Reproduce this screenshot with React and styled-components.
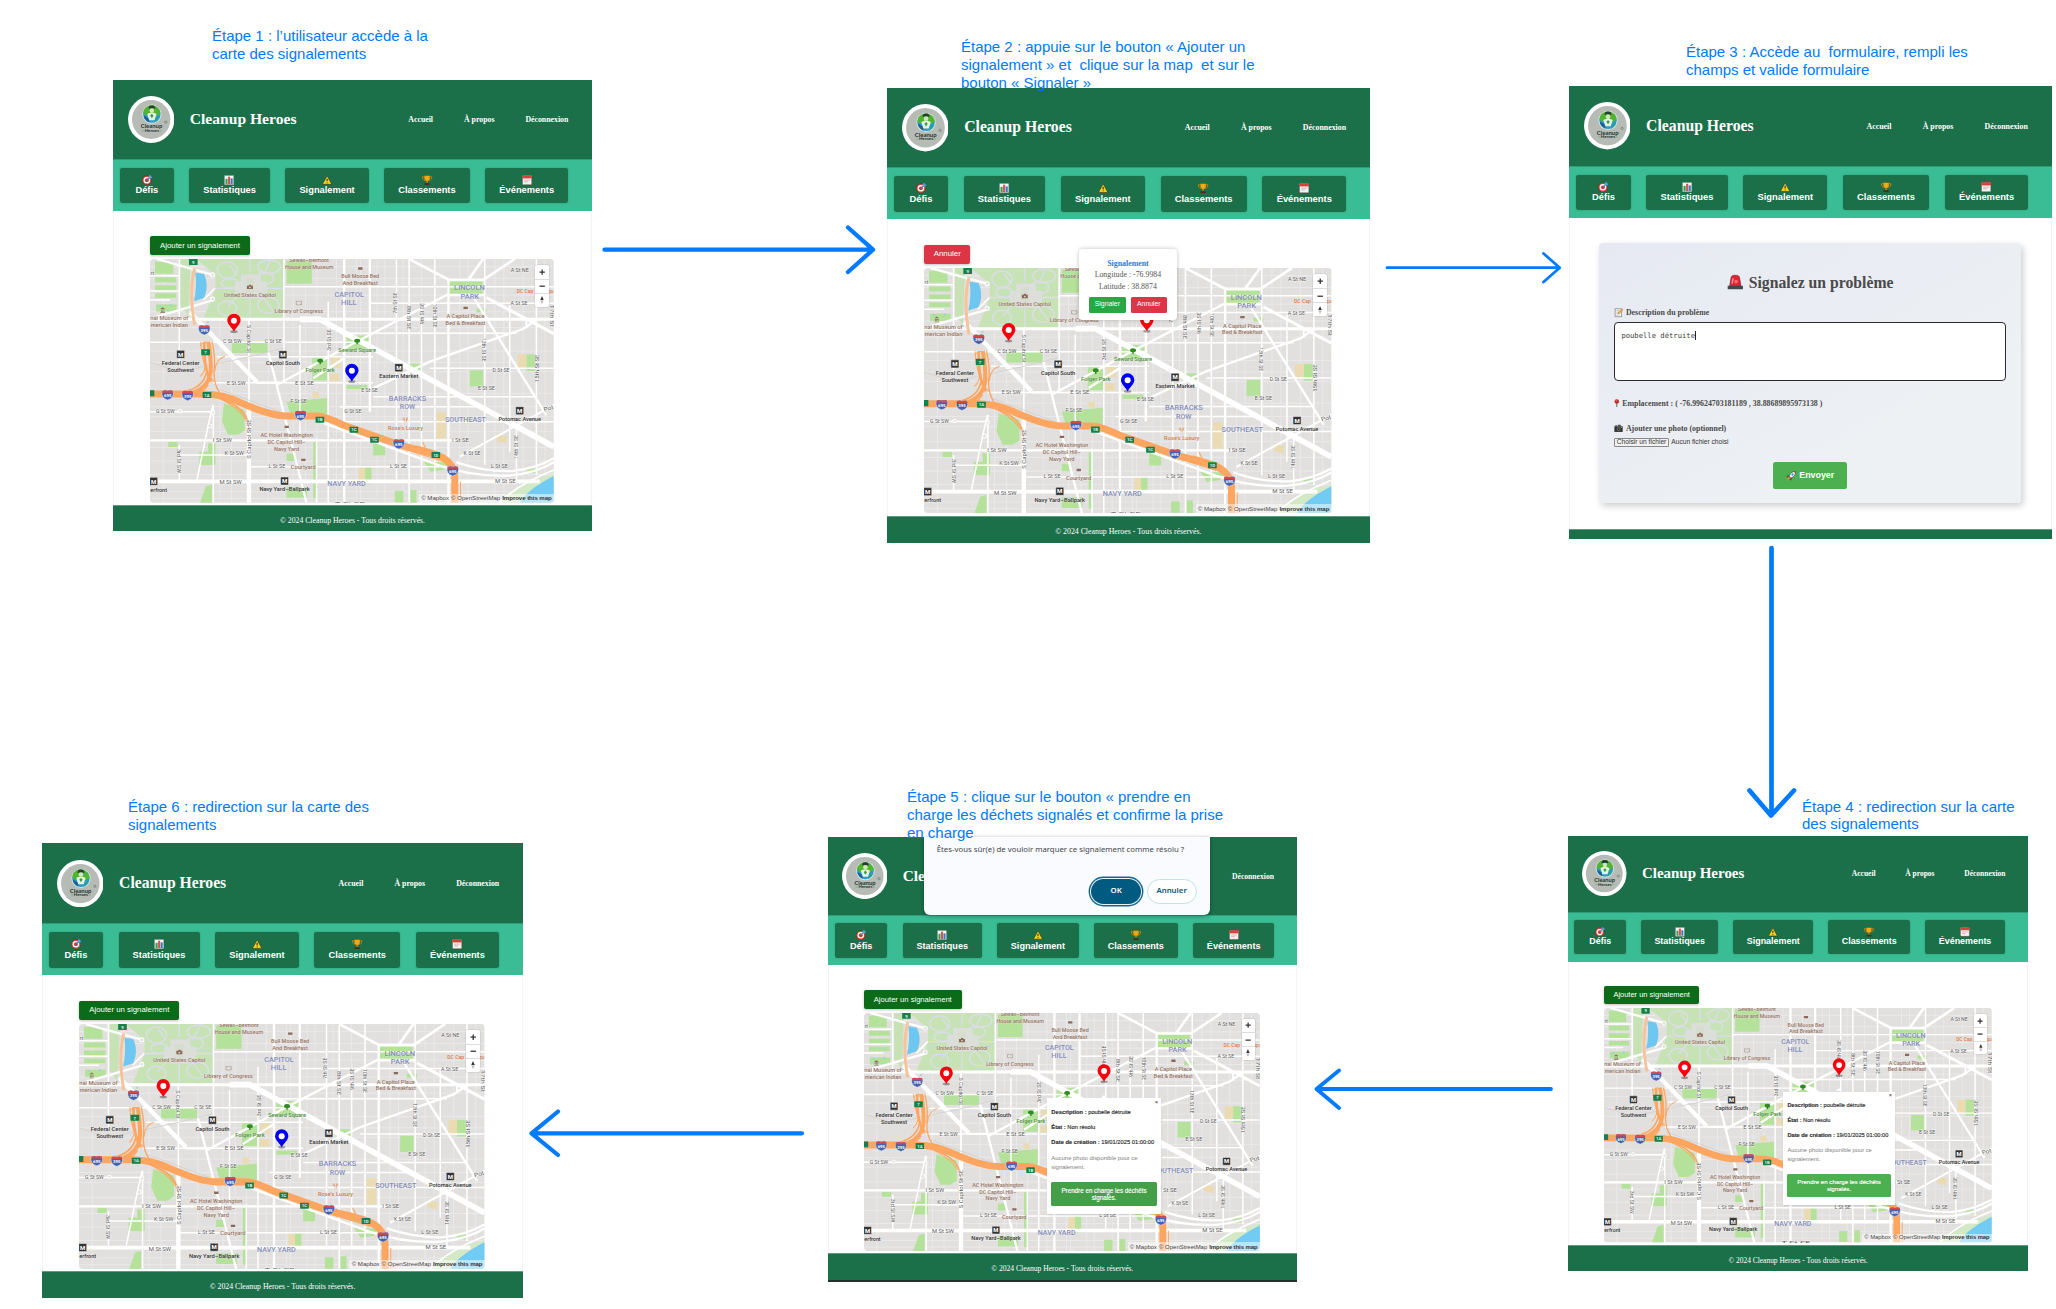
import React from "react";
import styled, { createGlobalStyle } from "styled-components";

const u = (n) => `calc(var(--u) * ${n})`;

const Global = createGlobalStyle`
  html, body { margin: 0; background: #fff; }
  * { box-sizing: border-box; }
`;

const serif = `"Liberation Serif", "Times New Roman", serif`;
const sans = `"Liberation Sans", Arial, sans-serif`;

/* ---------- canvas ---------- */
const Canvas = styled.div`
  position: relative;
  width: 2056px;
  height: 1309px;
  overflow: hidden;
  background: #fff;
`;
const Note = styled.p`
  position: absolute;
  left: ${(p) => p.$x}px;
  top: ${(p) => p.$y}px;
  margin: 0;
  white-space: pre;
  font: 15px/17.9px ${sans};
  color: #007aff;
`;
const Arrows = styled.svg`
  position: absolute;
  inset: 0;
  fill: none;
  stroke: #007aff;
  stroke-linecap: round;
  stroke-linejoin: round;
`;
const Board = styled.section`
  --u: ${(p) => p.$w / 479}px;
  position: absolute;
  left: ${(p) => p.$x}px;
  top: ${(p) => p.$y}px;
  width: ${(p) => p.$w}px;
  height: ${(p) => p.$h}px;
  display: flex;
  flex-direction: column;
  background: #fff;
  box-shadow: inset 2px 0 1px -1px #f3f3f3, inset -2px 0 1px -1px #f3f3f3;
  ${(p) => p.$edge && "border-bottom: 2px solid #26302c;"}
`;

/* ---------- site chrome ---------- */
const Header = styled.header`
  flex: none;
  height: ${(p) => p.$h}px;
  display: flex;
  align-items: center;
  padding: 0 ${u(23.7)} 0 ${u(14.7)};
  background: #1b7049;
  color: #fff;
  font-family: ${serif};
`;
const Logo = styled.svg`
  width: ${u(46.4)};
  height: ${u(47)};
  flex: none;
`;
const Title = styled.h1`
  margin: 0 auto 0 ${u(15.7)};
  font-size: ${u(15.6)};
  line-height: 1.2;
  white-space: nowrap;
`;
const Links = styled.nav`
  display: flex;
  gap: ${u(31)};
  font-size: ${u(7.8)};
  font-weight: bold;
  white-space: nowrap;
`;
const Tabs = styled.nav`
  flex: none;
  height: ${(p) => p.$h}px;
  display: flex;
  align-items: center;
  gap: ${u(15.6)};
  padding-left: ${(p) => p.$pad}px;
  background: #3abd94;
  border-top: 1px solid #2f9b78;
`;
const Tab = styled.button`
  width: ${(p) => u(p.$w)};
  height: ${u(35.4)};
  display: flex;
  flex-direction: column;
  align-items: center;
  justify-content: center;
  gap: ${u(0.5)};
  border: 0;
  padding: 0 0 ${u(0.5)};
  border-radius: ${u(2.4)};
  background: #1b7049;
  box-shadow: 0 0 2px rgba(0, 70, 40, 0.35);
  color: #fff;
  font: bold ${u(9.3)} / 1.1 ${sans};
`;
const Icon = styled.svg`
  width: ${(p) => u(p.$s || 10.2)};
  height: ${(p) => u(p.$s || 10.2)};
  flex: none;
  overflow: visible;
`;
const Main = styled.main`
  flex: 1;
  min-height: 0;
  padding: ${u(25.5)} ${u(38.1)} 0 ${u(37.2)};
  display: flex;
  flex-direction: column;
  align-items: flex-start;
`;
const Footer = styled.footer`
  flex: none;
  height: ${(p) => p.$h}px;
  display: flex;
  align-items: center;
  justify-content: center;
  padding-top: ${u(5)};
  padding-bottom: ${u(1)};
  background: #1b7049;
  border-top: 1px solid #5c9c80;
  color: #fff;
  font: ${u(7.76)} / 1 ${serif};
  white-space: nowrap;
`;
const Action = styled.button`
  flex: none;
  width: ${(p) => u(p.$w)};
  height: ${u(18.8)};
  margin-bottom: ${u(4.4)};
  padding: 0;
  border: 0;
  border-radius: ${u(2)};
  background: ${(p) => p.$bg};
  box-shadow: 0 1px 3px rgba(0, 0, 0, 0.25);
  color: #fff;
  font: ${u(7.8)} / 1 ${sans};
`;

/* ---------- map ---------- */
const MapBox = styled.div`
  position: relative;
  flex: none;
  width: 100%;
  height: ${(p) => p.$h}px;
`;
const MapArt = styled.svg`
  display: block;
  width: 100%;
  height: 100%;
  border-radius: ${u(4)};
  font-family: Roboto, "Open Sans", sans-serif;
`;
const Controls = styled.div`
  position: absolute;
  top: ${u(6)};
  right: ${u(4.7)};
  width: ${u(14)};
  height: ${u(41.6)};
  display: grid;
  grid-template-rows: repeat(3, 1fr);
  background: #fff;
  border-radius: ${u(2)};
  box-shadow: 0 0 0 1px rgba(0, 0, 0, 0.06);
`;
const Control = styled.button`
  border: 0;
  padding: 0;
  background: none;
  display: grid;
  place-items: center;
  & + & { border-top: 1px solid #ddd; }
`;
const Credit = styled.div`
  position: absolute;
  right: 0;
  bottom: 0;
  display: flex;
  gap: ${u(2)};
  align-items: center;
  height: ${u(9)};
  padding: 0 ${u(2.2)};
  background: rgba(255, 255, 255, 0.5);
  color: #444;
  white-space: nowrap;
  font: ${u(6.1)} / 1 ${sans};
  b { color: #333; letter-spacing: -0.01em; }
`;

/* ---------- popups ---------- */
const PickPopup = styled.div`
  position: absolute;
  left: ${u(153.3)};
  top: ${u(-18.8)};
  width: ${u(97.2)};
  height: ${u(70.3)};
  display: flex;
  flex-direction: column;
  align-items: center;
  padding-top: ${u(8.8)};
  background: #fff;
  border-radius: ${u(3.5)};
  box-shadow: 0 0 4px rgba(0, 0, 0, 0.25);
  font: ${u(7.8)} / ${u(11.2)} ${serif};
  color: #555;
  white-space: nowrap;
  strong { color: #1a7fd0; }
`;
const PickButtons = styled.div`
  display: flex;
  gap: ${u(5.2)};
  margin-top: ${u(5.2)};
`;
const SmallButton = styled.button`
  width: ${(p) => u(p.$w)};
  height: ${u(15.2)};
  padding: 0;
  border: 0;
  border-radius: ${u(1.6)};
  background: ${(p) => p.$bg};
  color: #fff;
  font: ${u(6.8)} / 1 ${sans};
`;
const InfoPopup = styled.div`
  position: absolute;
  left: ${u(186.7)};
  top: ${u(86.8)};
  width: ${u(116.3)};
  height: ${u(118.2)};
  padding: ${u(10)} ${u(4.4)} 0;
  background: #fff;
  box-shadow: 0 1px 2px rgba(0, 0, 0, 0.1);
  color: #2c2c2c;
  font: ${u(5.9)} / ${u(9.2)} ${sans};
  &::before {
    content: "";
    position: absolute;
    left: 50%;
    top: ${u(-3.6)};
    transform: translateX(-50%);
    border: ${u(3.8)} solid transparent;
    border-top: 0;
    border-bottom-color: #fff;
  }
`;
const InfoRow = styled.p`
  margin: 0 0 ${u(6.4)};
  white-space: nowrap;
  -webkit-text-stroke: 0.15px #2c2c2c;
`;
const InfoMuted = styled.p`
  margin: 0 0 ${u(11)};
  color: #808080;
  font-size: ${u(6.05)};
`;
const Close = styled.span`
  position: absolute;
  right: ${u(3)};
  top: ${u(-0.3)};
  font-size: ${u(6)};
`;
const TakeButton = styled.button`
  width: 100%;
  height: ${u(24)};
  border: 0;
  padding: 0;
  border-radius: ${u(1.6)};
  background: ${(p) => p.$bg};
  color: #fff;
  font: ${u(6.4)} / ${u(7.2)} ${sans};
  -webkit-text-stroke: 0.15px #fff;
`;
const Dialog = styled.div`
  position: absolute;
  left: ${u(98.4)};
  top: 0;
  width: ${u(291.6)};
  height: ${u(80)};
  display: flex;
  flex-direction: column;
  justify-content: space-between;
  padding: ${u(6.8)} ${u(13.6)} ${u(11.6)} ${u(13)};
  border-radius: 0 0 ${u(6)} ${u(6)};
  background: #f9fbfe;
  box-shadow: 0 1px 4px rgba(0, 0, 0, 0.35);
  color: #45484c;
  font: ${u(7.95)} / ${u(12)} "Noto Sans", "Open Sans", sans-serif;
  white-space: nowrap;
`;
const DialogButtons = styled.div`
  display: flex;
  justify-content: flex-end;
  align-items: center;
  gap: ${u(5.6)};
`;
const Pill = styled.button`
  width: ${u(51)};
  height: ${u(26)};
  padding: 0;
  border-radius: ${u(13)};
  font: 600 ${u(8)} / 1 "Noto Sans", "Open Sans", sans-serif;
  ${(p) =>
    p.$primary
      ? "border:0;background:#015b80;color:#fff;box-shadow:0 0 0 1px #e6f4fa,0 0 0 2.4px #1a6688;"
      : "border:1.3px solid #c0e4ef;background:#fff;color:#08577a;"}
`;

/* ---------- form ---------- */
const FormMain = styled.main`
  flex: 1;
  min-height: 0;
  padding: ${u(25.3)} ${u(30.4)} 0;
`;
const Card = styled.div`
  height: ${u(258)};
  display: flex;
  flex-direction: column;
  padding: ${u(29)} ${u(14.6)} 0 ${u(14.4)};
  border-radius: ${u(4)};
  background: linear-gradient(150deg, #e6e9f2, #edf1f4 70%);
  box-shadow: 2px 3px 7px rgba(0, 0, 0, 0.2);
  font-family: ${serif};
  color: #4a4a4a;
`;
const CardTitle = styled.h2`
  display: flex;
  justify-content: center;
  align-items: center;
  gap: ${u(5.4)};
  margin: 0 0 ${u(13.5)};
  font-size: ${u(15.6)};
  line-height: ${u(20)};
`;
const Label = styled.label`
  display: flex;
  align-items: center;
  gap: ${(p) => u(p.$gap)};
  height: ${u(12)};
  margin-bottom: ${(p) => u(p.$mb)};
  font-weight: bold;
  font-size: ${u(7.82)};
  white-space: nowrap;
`;
const Area = styled.div`
  height: ${u(58)};
  margin-bottom: ${u(16.3)};
  padding: ${u(7.6)} ${u(6.5)};
  border: 1.4px solid #2b2b2e;
  border-radius: ${u(4)};
  background: #fff;
  font: ${u(7.15)} / ${u(9)} "DejaVu Sans Mono", monospace;
  color: #3c3c3c;
`;
const Caret = styled.span`
  display: inline-block;
  width: 1px;
  height: ${u(9)};
  background: #222;
  vertical-align: top;
`;
const FileRow = styled.div`
  display: flex;
  align-items: center;
  gap: ${u(2)};
  margin-bottom: ${u(14.8)};
  font: ${u(6.6)} / 1 ${sans};
  color: #333;
`;
const FileButton = styled.span`
  width: ${u(55)};
  height: ${u(9.2)};
  display: grid;
  place-items: center;
  border: 1px solid #888;
  border-radius: 1px;
  background: #f2f2f2;
`;
const Send = styled.button`
  align-self: center;
  width: ${u(73.4)};
  height: ${u(26.5)};
  display: flex;
  align-items: center;
  justify-content: center;
  gap: ${u(3.2)};
  padding: 0;
  border: 0;
  border-radius: ${u(2.6)};
  background: #4caf50;
  color: #fff;
  font: bold ${u(8.8)} / 1 ${sans};
`;

/* ---------- icons ---------- */
const art = {
  target: (
    <>
      <circle cx="11.5" cy="12.5" r="11" fill="#e0483f" stroke="#1d3a2c" strokeWidth="1" />
      <circle cx="11.5" cy="12.5" r="7.6" fill="#fff" />
      <circle cx="11.5" cy="12.5" r="4.6" fill="#d9382f" />
      <path d="M11 13L20 4" stroke="#1f7fc4" strokeWidth="2.4" />
      <path d="M16 7V2l4-2 1 3 3 1-2 4h-5z" fill="#4aa8e0" />
    </>
  ),
  chart: (
    <>
      <rect x="1" y="1" width="22" height="22" fill="#f6f6f6" stroke="#63806f" />
      <rect x="3.500" y="9" width="5" height="12.500" fill="#3c9b51" />
      <rect x="9.500" y="4" width="5" height="17.500" fill="#d35555" />
      <rect x="15.500" y="8" width="5" height="13.500" fill="#3a7cc2" />
    </>
  ),
  warn: (
    <>
      <path d="M12 2L23 22H1z" fill="#fbd01f" stroke="#2a3a18" strokeWidth="1.4" strokeLinejoin="round" />
      <path d="M12 9v6M12 17.5v2" stroke="#222" strokeWidth="2.4" />
    </>
  ),
  trophy: (
    <>
      <path d="M5 4H1c0 5 2 8 6 8M19 4h4c0 5-2 8-6 8" fill="none" stroke="#c98709" strokeWidth="2.2" />
      <path d="M5 1h14v6c0 5-3 8-7 8s-7-3-7-8z" fill="#f0a815" stroke="#4a3b10" strokeWidth=".8" />
      <path d="M10.500 14h3v5h-3z" fill="#c98709" />
      <path d="M6 19h12v4.500H6z" fill="#4b2f1c" />
    </>
  ),
  calendar: (
    <>
      <rect x="1" y="1" width="22" height="22" rx="2" fill="#f4f0f0" stroke="#62312f" strokeWidth="1" />
      <path d="M1 1h22v7H1z" fill="#d8403c" />
      <path d="M5 12h14M5 16h9" stroke="#c9a9a9" strokeWidth="1.8" />
    </>
  ),
  siren: (
    <>
      <path d="M4 17L6 5c.5-2 2-3 4-3h4c2 0 3.500 1 4 3l2 12z" fill="#e22434" stroke="#7c1520" />
      <path d="M9 6c-1 3-1.500 6-1.500 8" stroke="#ff8c93" strokeWidth="2" fill="none" />
      <circle cx="13" cy="11" r="2.600" fill="#ff6a6a" />
      <path d="M1 17h22v5H1z" fill="#43484d" />
    </>
  ),
  memo: (
    <>
      <path d="M3 2h17v21H3z" fill="#fbf8ee" stroke="#4f4f4f" strokeWidth="1.400" />
      <path d="M6 7h9M6 11h7M6 15h9M6 19h9" stroke="#999" strokeWidth="1.300" />
      <path d="M11 15l1-4 9-9 3 3-9 9z" fill="#f0b53a" stroke="#7b4c1a" strokeWidth=".8" />
    </>
  ),
  pin: (
    <>
      <path d="M6.500 11h3v12h-3z" fill="#6b6b6b" />
      <circle cx="8" cy="7" r="6.500" fill="#c22a26" />
      <circle cx="6.500" cy="5" r="1.800" fill="#ef7a70" />
    </>
  ),
  camera: (
    <>
      <path d="M1 6h22v15H1z" fill="#2e3230" />
      <path d="M3 3h5v3H3zM10 2h8v4h-8z" fill="#4a4e4c" />
      <circle cx="12" cy="13.500" r="5" fill="#737a78" />
      <circle cx="12" cy="13.500" r="2.500" fill="#1a1d1c" />
      <path d="M18 8h3v2h-3z" fill="#e0c24a" />
    </>
  ),
  rocket: (
    <>
      <path d="M7 12c3-7 8-11 16-11 0 8-4 13-11 16z" fill="#e9eef3" stroke="#23384c" strokeWidth="1.200" />
      <path d="M8 10L2 12l2 4zM14 16l-2 6-4-2z" fill="#c6312f" stroke="#532" strokeWidth=".8" />
      <path d="M18 1l5 0 0 5z" fill="#c6312f" />
      <circle cx="15.500" cy="8.500" r="2.600" fill="#2f8fd0" />
      <path d="M6 15l3 3-7 5z" fill="#f39a2a" />
    </>
  ),
};
const Glyph = ({ name, size }) => (
  <Icon viewBox="0 0 24 24" $s={size}>{art[name]}</Icon>
);

const Emblem = () => (
  <Logo viewBox="0 0 140 142">
    <ellipse cx="70" cy="71" rx="70" ry="71" fill="#fff" />
    <ellipse cx="70" cy="71" rx="58" ry="59" fill="#b6bbb5" />
    <circle cx="72" cy="55" r="29" fill="#d7e3da" />
    <circle cx="72" cy="55" r="26" fill="#2d9bd0" />
    <path d="M46 52c1-16 14-24 26-23 13 0 24 8 26 23-7 8-14 6-17 12-6-6-13-6-18 0-3-7-12-6-17-12z" fill="#4fb52c" />
    <path d="M63 33c1-6 17-6 18 0l2 5H61z" fill="#25402e" />
    <circle cx="72" cy="44" r="7" fill="#cfe8b8" />
    <path d="M58 55c4-6 24-6 28 0l-6 18H64z" fill="#e4f2e4" />
    <path d="M67 59l5-5 5 5-5 8z" fill="#3b9c46" />
    <path d="M47 58c2 12 9 19 18 21l-4-12z" fill="#1d5f94" />
    <path d="M96 60c-2 10-8 17-16 20l4-14z" fill="#27a39c" />
    <circle cx="114" cy="79" r="3.500" fill="none" stroke="#55605a" strokeWidth="1.500" />
    <text x="71" y="98" textAnchor="middle" fontFamily="Lato, sans-serif" fontWeight="700" fontSize="14.500" textLength="65" lengthAdjust="spacingAndGlyphs" fill="#1f3630">Cleanup</text>
    <text x="72" y="109" textAnchor="middle" fontFamily="Lato, sans-serif" fontWeight="700" fontSize="10" textLength="43" lengthAdjust="spacingAndGlyphs" fill="#1f3630">Heroes</text>
    <path d="M42 105h7M95 105h7" stroke="#5c9c50" strokeWidth="1.500" />
  </Logo>
);

/* ---------- map drawing ---------- */
const brown = "#957262";
const violet = "#858db8";
const dark = "#333";
const street = "#5c5c5c";
const places = [
  ["House and Museum", 508, 132, 145, brown],
  ["Sewall–Belmont", 508, 111, 118, brown],
  ["Bull Moose Bed", 661, 160, 114, brown],
  ["And Breakfast", 661, 181, 106, brown],
  ["United States Capitol", 330, 215, 156, brown],
  ["Library of Congress", 477, 264, 146, brown],
  ["nal Museum of", 88, 284, 114, brown],
  ["merican Indian", 88, 305, 112, brown],
  ["A Capitol Place", 977, 280, 114, brown],
  ["Bed & Breakfast", 977, 300, 120, brown],
  ["AC Hotel Washington", 440, 635, 157, brown],
  ["DC Capitol Hill–", 440, 656, 114, brown],
  ["Navy Yard", 440, 677, 76, brown],
  ["Courtyard", 490, 733, 75, brown],
  ["Rose's Luxury", 797, 616, 105, "#d5763f"],
  ["DC Cap", 1156, 205, 50, "#d5763f"],
  ["qu", 1234, 205, 15, "#d5763f"],
  ["Seward Square", 652, 380, 113, "#4a8f38"],
  ["Folger Park", 541, 440, 88, "#4a8f38"],
  ["Federal Center", 122, 420, 114, dark],
  ["Southwest", 122, 442, 80, dark],
  ["Capitol South", 429, 420, 102, dark],
  ["Eastern Market", 777, 459, 117, dark],
  ["Potomac Avenue", 1140, 588, 127, dark],
  ["Navy Yard–Ballpark", 434, 799, 151, dark],
  ["erfront", 56, 800, 50, dark],
];
const districts = [
  ["CAPITOL", 628, 215, 88], ["HILL", 627, 240, 47],
  ["LINCOLN", 989, 196, 92], ["PARK", 990, 221, 56],
  ["BARRACKS", 803, 527, 112], ["ROW", 803, 552, 46],
  ["SOUTHEAST", 977, 592, 123], ["NAVY YARD", 620, 782, 116],
];
const streets = [
  ["C St SW", 277, 355, 56], ["C St SE", 400, 355, 51], ["E St SW", 289, 479, 56],
  ["E St SE", 494, 479, 57], ["E St SE", 689, 500, 50], ["E St SE", 1040, 495, 51],
  ["F St SE", 476, 533, 49], ["G St SE", 639, 564, 52], ["G St SW", 76, 564, 56],
  ["D St SE", 1084, 440, 51], ["I St SW", 247, 651, 57], ["I St SE", 962, 651, 51],
  ["K St SW", 283, 689, 58], ["K St SE", 997, 690, 51], ["L St SE", 411, 728, 51],
  ["L St SE", 776, 728, 51], ["L St SE", 1079, 728, 51], ["M St SW", 272, 778, 67],
  ["M St SE", 1097, 773, 62], ["A St NE", 1140, 142, 54], ["A St SE", 1138, 241, 51],
  ["T   St SE", 630, 843, 90], ["rt", 37, 149, 10],
];
const uprights = [
  ["7th St SE", 765, 234, 64, -90], ["8th St SE", 807, 278, 72, 90], ["9th St SE", 847, 266, 64, -90],
  ["10th St SE", 886, 272, 72, 90], ["3rd St SE", 567, 345, 64, -90], ["13th St SE", 1034, 374, 72, 90],
  ["15th St SE", 1192, 430, 82, -90], ["14th St SE", 1129, 666, 72, -90], ["3rd St SW", 118, 708, 72, 90],
  ["S Capitol St", 327, 342, 84, 90], ["S Capitol St SE", 328, 642, 118, -90], ["Pot", 1226, 550, 30, -16],
  ["17th St", 1237, 272, 66, 90],
];
const metros = [[122, 388], [429, 389], [777, 428], [1140, 557], [434, 768], [41, 769]];
const shields = [[193, 314], [83, 509], [143, 511], [482, 571], [777, 656], [939, 737]];
const exits = [["9", 160, 111], ["7", 197, 382], ["1A", 201, 510], ["1B", 540, 584], ["1C", 642, 614], ["1C", 704, 644], ["1D", 888, 690], ["", 30, 505]];
const thinV = [70, 240, 275, 385, 460, 497, 531, 590, 650, 662, 712, 735, 790, 845, 885, 960, 985, 1065, 1092, 1150, 1216];
const thinH = [125, 160, 210, 260, 308, 378, 412, 440, 505, 545, 575, 620, 667, 708, 748, 800, 820];
const wideV = [[118, 102, 420], [565, 230, 833], [770, 102, 770], [808, 102, 833], [845, 250, 770], [885, 102, 770], [1035, 102, 720], [1110, 240, 680], [1130, 600, 770], [1190, 102, 750], [220, 540, 833], [480, 300, 640], [530, 640, 833]];
const wideH = [[185, 430, 1242], [235, 690, 1242], [325, 613, 1130], [352, 30, 690], [395, 230, 700], [430, 870, 1242], [473, 220, 700], [515, 700, 1190], [545, 600, 1010], [590, 560, 1242], [725, 330, 940], [690, 120, 330], [560, 30, 130]];
const parks = [
  [45, 157, 64, 15], [45, 181, 64, 15], [45, 205, 64, 14], [45, 110, 55, 36], [48, 238, 62, 22],
  [440, 106, 76, 70], [275, 352, 108, 32], [517, 398, 46, 68], [620, 332, 70, 42], [928, 163, 100, 46],
  [990, 436, 40, 48], [810, 416, 32, 22], [620, 480, 62, 12], [178, 680, 48, 40], [204, 655, 22, 60],
  [440, 786, 62, 32], [520, 650, 12, 170], [1160, 388, 28, 50], [85, 650, 28, 16], [1010, 250, 30, 12],
  [675, 725, 20, 50], [765, 798, 26, 34], [812, 795, 18, 38], [700, 655, 36, 36], [1160, 730, 30, 14],
];

const Pin = ({ x, y, color }) => (
  <g transform={`translate(${x} ${y})`}>
    <ellipse cx="0" cy="0" rx="11" ry="4" fill="rgba(0,0,0,.35)" />
    <path d="M0 0C-5-12-20-21-20-34a20 20 0 0140 0C20-21 5-12 0 0z" fill={color} />
    <circle cx="0" cy="-33" r="9" fill="#fff" />
  </g>
);

const CityMap = ({ pins }) => (
  <MapArt viewBox="30 102 1212 731" preserveAspectRatio="none">
    <rect x="30" y="102" width="1212" height="731" fill="#e2e0de" />
    <g stroke="#ebebee" strokeWidth="2.500">
      {thinV.map((x) => <path key={x} d={`M${x} 102V833`} />)}
      {thinH.map((y) => <path key={y} d={`M30 ${y}H1242`} />)}
    </g>
    <g fill="#b5e29b">
      {parks.map((p, i) => <rect key={i} x={p[0]} y={p[1]} width={p[2]} height={p[3]} />)}
      <path d="M252 535l62 20v62l-20 12h-30l-18-40z" />
      <path d="M440 530l60-6 62-5v56l-20-5h-90z" />
      <path d="M852 710l70 2-10 22-40 6zM180 833l18-50 18-4v54z" />
      <path d="M440 686h24v22h-24z" />
    </g>
    <path d="M170 102H432V282H190L226 190V150z" fill="#c7e3b6" />
    <path d="M122 102h30l-6 170-24-30z" fill="#c7e3b6" />
    <path d="M1080 833c30-40 70-60 160-85v30l-110 55z" fill="#d3e8c5" />
    <path d="M573 392h28v36h-28zM570 446h28v22h-28zM1134 388h26v44h-26zM890 562h28v78h-28zM656 725h20v52h-20zM516 503l22-4v20h-18zM1070 628l34 6-6 22-26-8z" fill="#eadbb2" />
    <g fill="none" stroke="#dddcea" strokeWidth="4">
      <ellipse cx="262" cy="135" rx="30" ry="24" /><ellipse cx="388" cy="125" rx="34" ry="20" />
      <ellipse cx="375" cy="160" rx="26" ry="18" /><ellipse cx="262" cy="250" rx="28" ry="22" />
      <ellipse cx="385" cy="240" rx="32" ry="24" /><ellipse cx="270" cy="175" rx="26" ry="14" />
      <path d="M225 190h205M330 102v40M330 222v60M290 150l-20-30M370 150l20-40M290 215l-25 30M368 215l30 40" />
      <path d="M305 150h56v22h18v30h-18v16h-56v-16h-18v-30h18z" fill="#dcdfd8" strokeWidth="3" />
      <path d="M318 160h24v44h-24z" fill="#d6dcce" stroke="none" />
    </g>
    <path d="M166 143l26 4c12 24 10 52 0 72l-30 10c6-28 8-58 4-86z" fill="#6ec7f0" />
    <path d="M1140 833c20-34 60-58 102-80v80z" fill="#72cbf3" />
    <g fill="#8fd0ef"><circle cx="60" cy="243" r="3" /><circle cx="92" cy="240" r="3" /><circle cx="204" cy="292" r="3" /></g>

    <g stroke="#fff" fill="none">
      <g strokeWidth="4.500">
        {wideV.map(([x, a, b], i) => <path key={i} d={`M${x} ${a}V${b}`} />)}
        {wideH.map(([y, a, b], i) => <path key={i} d={`M${a} ${y}H${b}`} />)}
        <path d="M118 660V770M205 600L170 770M205 600l14-60M130 560h85" />
        <path d="M432 102V283M432 283v190M30 152h88M30 198h88M30 225h60" />
        <path d="M700 490L870 410L1150 312L1190 285" strokeWidth="7" />
        <path d="M410 480L650 350L925 208M520 460L613 400" strokeWidth="7" />
        <path d="M1160 310V285M1242 540L960 695" strokeWidth="6" />
      </g>
      <path d="M30 283H1242" strokeWidth="9" />
      <path d="M30 646H560M560 646H960" strokeWidth="7" />
      <path d="M30 769H1200" strokeWidth="11" />
      <path d="M327 283V560" strokeWidth="5" /><path d="M327 540V833" strokeWidth="13" />
      <path d="M690 102V560M926 160V833M613 102v731" strokeWidth="7" />
      <path d="M50 102L222 150M222 225L50 275" strokeWidth="7" />
      <path d="M150 262L350 470" strokeWidth="13" />
      <path d="M350 473H420M385 380L500 833" strokeWidth="7" />
      <path d="M480 283H540L1242 665" strokeWidth="17" />
      <path d="M808 102L928 165H1030L1125 102M1030 102L985 165M925 210H1035" strokeWidth="8" />
      <path d="M1000 215L1220 570" strokeWidth="7" /><path d="M1040 218L1242 326" strokeWidth="9" />
      <path d="M190 225L225 190" strokeWidth="5" />
      <path d="M540 590L900 722Q1000 756 1110 752Q1190 744 1242 712M950 712Q1040 742 1120 738Q1190 730 1242 700" strokeWidth="7" />
      <path d="M1080 833Q1130 780 1242 735" strokeWidth="5" />
      <g fill="#e3e1df" strokeWidth="3">
        <circle cx="218" cy="149" r="6" /><circle cx="218" cy="222" r="6" /><circle cx="121" cy="558" r="5" />
        <circle cx="219" cy="563" r="5" /><circle cx="210" cy="603" r="6" />
      </g>
    </g>
    <path d="M30 412L120 440L330 395L430 370M230 490L420 560" stroke="#d2d0cd" strokeWidth="2.500" fill="none" />

    <g fill="none" stroke="#fea55f">
      <path d="M164 130Q146 200 164 300" strokeWidth="9" stroke="#f8c39b" />
      <path d="M30 507H190Q250 508 300 532Q390 572 440 573H530Q560 575 610 600L780 660L880 686Q945 706 945 760V833" strokeWidth="21" />
      <path d="M205 350Q214 400 212 440Q206 490 150 506" strokeWidth="12" />
      <path d="M193 350V385Q196 440 214 470" strokeWidth="8" />
      <path d="M216 350Q228 400 222 440Q222 480 240 505Q260 518 290 528" strokeWidth="4" />
      <path d="M182 350Q186 430 222 470M196 400Q200 440 180 455M255 394Q226 404 224 440M180 362Q200 340 212 362" strokeWidth="3" />
      <path d="M200 440Q190 490 130 500M240 520Q310 545 322 585" strokeWidth="5" />
      <path d="M780 668L900 706M830 662L900 684M848 650L860 675M962 770V833" strokeWidth="3" />
      <path d="M232 516Q320 560 328 610" strokeWidth="3" />
      <path d="M120 512Q180 520 205 480" strokeWidth="4" />
    </g>

    {exits.map(([t, x, y], i) => (
      <g key={i}>
        <rect x={x - 13} y={y - 9} width="26" height="18" rx="1.500" fill="#16804a" />
        {t && <text x={x} y={y + 5} fontSize="13" fontWeight="700" fill="#dff2e6" textAnchor="middle">{t}</text>}
      </g>
    ))}
    {shields.map(([x, y], i) => (
      <g key={i} transform={`translate(${x} ${y})`}>
        <path d="M-15-12Q-8-15 0-12Q8-15 15-12Q20-2 15 6Q10 13 0 16Q-10 13-15 6Q-20-2-15-12z" fill="#4562b0" stroke="#eee" strokeWidth="1.500" />
        <path d="M-15-12Q-8-15 0-12Q8-15 15-12L17-6H-17z" fill="#cf4a51" />
        <text y="7" fontSize="13" fontWeight="700" fill="#fff" textAnchor="middle">{i === 0 || i === 2 ? "395" : "695"}</text>
      </g>
    ))}
    {metros.map(([x, y], i) => (
      <g key={i}>
        <rect x={x - 12} y={y - 12} width="24" height="24" rx="2" fill="#333" stroke="#f4f4f4" strokeWidth="1.500" />
        <text x={x} y={y + 6.500} fontSize="18" fontWeight="700" fill="#fff" textAnchor="middle">M</text>
      </g>
    ))}
    <g fill="#8c6a5a">
      <path d="M321 182h5l2-3h5l2 3h4v10h-18zM655 127h13v7h-13zM971 245h13v7h-13zM434 602h13v7h-13zM484 701h13v7h-13z" />
      <path d="M61 252l7-5 7 5zM62 254h12v2H62zM63 257h2v4h-2zM67 257h2v4h-2zM71 257h2v4h-2zM61 262h14v2H61z" />
    </g>
    <circle cx="330" cy="187" r="2.500" fill="#e8dcd4" />
    <path d="M469 229h6l2 2 2-2h6v10h-6l-2 2-2-2h-6z" fill="none" stroke="#a08474" strokeWidth="1.600" />
    <path d="M793 578v6h2v8M800 578v14M790 578v6h3M803 578v6h-3" stroke="#e58a55" strokeWidth="1.800" fill="none" />
    <g fill="#2f8a24">
      <path d="M643 348q0-7 9-7t9 7q0 5-7 5v5h-4v-5q-7 0-7-5zM532 408q0-7 9-7t9 7q0 5-7 5v5h-4v-5q-7 0-7-5z" />
    </g>

    <g fontSize="18.500" fontWeight="500" textAnchor="middle" stroke="#f4f3f2" strokeWidth="2" paintOrder="stroke" strokeOpacity=".6">
      {places.map(([t, x, y, w, c], i) => (
        <text key={i} x={x} y={y} textLength={w} lengthAdjust="spacingAndGlyphs" fill={c}>{t}</text>
      ))}
    </g>
    <g fontSize="20" fontWeight="500" textAnchor="middle" fill={violet} stroke="#efeff2" strokeWidth="2" paintOrder="stroke" strokeOpacity=".5">
      {districts.map(([t, x, y, w], i) => (
        <text key={i} x={x} y={y} textLength={w} lengthAdjust="spacingAndGlyphs">{t}</text>
      ))}
    </g>
    <g fontSize="18" textAnchor="middle" fill={street} stroke="#fff" strokeWidth="2.500" paintOrder="stroke" strokeOpacity=".7">
      {streets.map(([t, x, y, w], i) => (
        <text key={i} x={x} y={y} textLength={w} lengthAdjust="spacingAndGlyphs">{t}</text>
      ))}
      {uprights.map(([t, x, y, w, r], i) => (
        <text key={i} transform={`translate(${x} ${y}) rotate(${r})`} y="6" textLength={w} lengthAdjust="spacingAndGlyphs">{t}</text>
      ))}
    </g>
    {pins.map((p, i) => <Pin key={i} x={p[0]} y={p[1]} color={p[2]} />)}
  </MapArt>
);

const red1 = [282, 320, "#f8000c"];
const blue = [636, 470, "#0000f5"];

const MapView = ({ h, pins, children }) => (
  <MapBox $h={h}>
    <CityMap pins={pins} />
    <Controls>
      <Control><Icon $s={6.4} viewBox="0 0 12 12"><path d="M6 1v10M1 6h10" stroke="#333" strokeWidth="2.400" /></Icon></Control>
      <Control><Icon $s={6.4} viewBox="0 0 12 12"><path d="M1 6h10" stroke="#333" strokeWidth="2.400" /></Icon></Control>
      <Control><Icon $s={8} viewBox="0 0 14 14"><path d="M7 0l3 7H4z" fill="#333" /><path d="M7 14l3-6H4z" fill="#bbb" /></Icon></Control>
    </Controls>
    <Credit><span>© Mapbox</span><span>© OpenStreetMap</span><b>Improve this map</b></Credit>
    {children}
  </MapBox>
);

const tabs = [
  ["target", "Défis", 53.7], ["chart", "Statistiques", 80.6], ["warn", "Signalement", 83.2],
  ["trophy", "Classements", 85.4], ["calendar", "Événements", 83],
];

const Site = ({ x, y, w, h, head, nav, pad, foot, edge, overlay, children }) => (
  <Board $x={x} $y={y} $w={w} $h={h} $edge={edge}>
    <Header $h={head}>
      <Emblem />
      <Title>Cleanup Heroes</Title>
      <Links><span>Accueil</span><span>À propos</span><span>Déconnexion</span></Links>
    </Header>
    <Tabs $h={nav} $pad={pad}>
      {tabs.map(([icon, label, width]) => (
        <Tab key={label} $w={width}><Glyph name={icon} /><span>{label}</span></Tab>
      ))}
    </Tabs>
    {children}
    <Footer $h={foot}>{foot > 15 && "© 2024 Cleanup Heroes - Tous droits réservés."}</Footer>
    {overlay}
  </Board>
);

const AddButton = () => <Action $w={99.5} $bg="#0b6b18">Ajouter un signalement</Action>;

const Details = ({ bg }) => (
  <InfoPopup>
    <Close>×</Close>
    <InfoRow><b>Description :</b> poubelle détruite</InfoRow>
    <InfoRow><b>État :</b> Non résolu</InfoRow>
    <InfoRow><b>Date de création :</b> 19/01/2025 01:00:00</InfoRow>
    <InfoMuted>Aucune photo disponible pour ce<br />signalement.</InfoMuted>
    <TakeButton $bg={bg}>Prendre en charge les déchêts<br />signalés.</TakeButton>
  </InfoPopup>
);

export default function App() {
  return (
    <>
      <Global />
      <Canvas>
        <Site x={113} y={79.5} w={479} h={451.8} head={79.5} nav={51.6} pad={7} foot={26.7}>
          <Main><AddButton /><MapView h={243.7} pins={[red1, blue]} /></Main>
        </Site>

        <Site x={886.7} y={88.3} w={483.3} h={454.7} head={79.1} nav={51.7} pad={7.2} foot={27}>
          <Main>
            <Action $w={45.6} $bg="#dc3545">Annuler</Action>
            <MapView h={245.1} pins={[red1, [693, 291, "#f8000c"], blue]}>
              <PickPopup>
                <strong>Signalement</strong>
                <span>Longitude : -76.9984</span>
                <span>Latitude : 38.8874</span>
                <PickButtons>
                  <SmallButton $w={36.3} $bg="#28a745">Signaler</SmallButton>
                  <SmallButton $w={35.6} $bg="#dc3545">Annuler</SmallButton>
                </PickButtons>
              </PickPopup>
            </MapView>
          </Main>
        </Site>

        <Site x={1568.7} y={86} w={483} h={452.6} head={80} nav={51.8} pad={7.8} foot={10}>
          <FormMain>
            <Card>
              <CardTitle><Glyph name="siren" size={16.5} />Signalez un problème</CardTitle>
              <Label $mb={4} $gap={3}><Glyph name="memo" size={9} />Description du problème</Label>
              <Area>poubelle détruite<Caret /></Area>
              <Label $mb={12.8} $gap={0}><Glyph name="pin" size={8.3} />Emplacement : ( -76.99624703181189 , 38.88689895973138 )</Label>
              <Label $mb={3.6} $gap={3}><Glyph name="camera" size={9} />Ajouter une photo (optionnel)</Label>
              <FileRow><FileButton>Choisir un fichier</FileButton>Aucun fichier choisi</FileRow>
              <Send><Glyph name="rocket" size={10} />Envoyer</Send>
            </Card>
          </FormMain>
        </Site>

        <Site x={42} y={843.4} w={481} h={454.3} head={80} nav={51.7} pad={7} foot={26.7}>
          <Main><AddButton /><MapView h={245} pins={[red1, blue]} /></Main>
        </Site>

        <Site
          x={827.5} y={837} w={469.7} h={444.7} head={78} nav={50.2} pad={7.3} foot={26.7} edge
          overlay={
            <Dialog>
              <span>Êtes-vous sûr(e) de vouloir marquer ce signalement comme résolu ?</span>
              <DialogButtons><Pill $primary>OK</Pill><Pill>Annuler</Pill></DialogButtons>
            </Dialog>
          }
        >
          <Main>
            <AddButton />
            <MapView h={238.3} pins={[red1, [765, 313, "#f8000c"]]}><Details bg="#459f49" /></MapView>
          </Main>
        </Site>

        <Site x={1568.2} y={835.8} w={460} h={435.4} head={76} nav={49.8} pad={6.3} foot={26.4}>
          <Main>
            <AddButton />
            <MapView h={234.3} pins={[red1, [765, 313, "#f8000c"]]}><Details bg="#4caf50" /></MapView>
          </Main>
        </Site>

        <Arrows width="2056" height="1309" viewBox="0 0 2056 1309">
          <path strokeWidth="4.300" d="M604.500 249.700H872M848 227.500L873 249.700L848 272" />
          <path strokeWidth="2.800" d="M1387 267.700H1559M1543.500 253.500L1559.700 267.700L1543.500 282" />
          <path strokeWidth="4.700" d="M1771.500 548V815M1749.500 790.500L1771 815.500L1794 790.500" />
          <path strokeWidth="3.800" d="M1551 1089H1317M1339 1070.500L1316.500 1089L1339 1108" />
          <path strokeWidth="4.200" d="M802 1133.300H532M558 1111.500L531.500 1133.300L558 1155" />
        </Arrows>

        <Note $x={212} $y={26.800}>{"Étape 1 : l’utilisateur accède à la\ncarte des signalements"}</Note>
        <Note $x={961} $y={38}>{"Étape 2 : appuie sur le bouton « Ajouter un\nsignalement » et  clique sur la map  et sur le\nbouton « Signaler »"}</Note>
        <Note $x={1686} $y={42.800}>{"Étape 3 : Accède au  formulaire, rempli les\nchamps et valide formulaire"}</Note>
        <Note $x={1802} $y={797.500}>{"Étape 4 : redirection sur la carte\ndes signalements"}</Note>
        <Note $x={907} $y={788}>{"Étape 5 : clique sur le bouton « prendre en\ncharge les déchets signalés et confirme la prise\nen charge"}</Note>
        <Note $x={128} $y={797.800}>{"Étape 6 : redirection sur la carte des\nsignalements"}</Note>
      </Canvas>
    </>
  );
}
